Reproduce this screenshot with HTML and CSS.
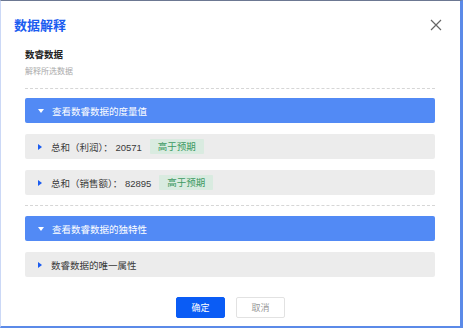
FILE: index.html
```html
<!DOCTYPE html>
<html lang="zh">
<head>
<meta charset="utf-8">
<link rel="stylesheet" href="styles.css">
</head>
<body>
<div class="dialog">
  <div class="header">
    <h1 class="title">数据解释</h1>
    <svg class="close" width="12" height="12" viewBox="0 0 12 12"><path d="M1 1L11 11M11 1L1 11" stroke="#666" stroke-width="1.2" fill="none"/></svg>
  </div>
  <div class="body">
    <div class="intro">
      <div class="name">数睿数据</div>
      <div class="desc">解释所选数据</div>
    </div>
    <div class="section">
      <div class="bar"><span class="tri-down"></span>查看数睿数据的度量值</div>
      <div class="row"><span class="tri-right"></span>总和（利润）： 20571<span class="tag">高于预期</span></div>
      <div class="row"><span class="tri-right"></span>总和（销售额）： 82895<span class="tag">高于预期</span></div>
    </div>
    <div class="section second">
      <div class="bar"><span class="tri-down"></span>查看数睿数据的独特性</div>
      <div class="row"><span class="tri-right"></span>数睿数据的唯一属性</div>
    </div>
  </div>
  <div class="footer">
    <button class="btn primary">确定</button>
    <button class="btn">取消</button>
  </div>
</div>
</body>
</html>
```
FILE: styles.css
```css
* { box-sizing: border-box; }
html, body { margin: 0; padding: 0; }
body {
  font-family: "Noto Sans CJK SC", "Noto Sans", sans-serif;
  background: #fff;
}
.dialog {
  width: 463px;
  height: 328px;
  border-top: 1px solid #6c7892;
  border-left: 1px solid #cbd8f6;
  border-right: 3px solid #5b8ae8;
  border-bottom: 2px solid #5b8ae8;
  background: #fff;
  display: flex;
  flex-direction: column;
}
.header {
  display: flex;
  align-items: center;
  justify-content: space-between;
  padding: 14px 18px 0 13px;
  height: 34px;
}
.title {
  margin: 0;
  font-size: 13px;
  font-weight: 700;
  color: #1a5cf0;
  line-height: 18px;
}
.close { display: block; }
.body {
  padding: 0 25px 0 24px;
  display: flex;
  flex-direction: column;
}
.intro {
  padding-top: 12px;
  padding-bottom: 11px;
  border-bottom: 1px dashed #d6d6d6;
}
.name {
  font-size: 9.5px;
  font-weight: 700;
  color: #222;
  line-height: 14px;
}
.desc {
  font-size: 8px;
  color: #aaa;
  line-height: 12px;
  margin-top: 4px;
}
.section {
  padding: 9px 0 0;
  display: flex;
  flex-direction: column;
  gap: 11px;
}
.section.second {
  border-top: 1px dashed #d6d6d6;
  margin-top: 10px;
  padding-top: 10px;
}
.bar {
  height: 25px;
  background: #528af5;
  border-radius: 2px;
  color: #fff;
  font-size: 9.5px;
  display: flex;
  align-items: center;
  padding-left: 13px;
}
.row {
  height: 25px;
  background: #ececec;
  border-radius: 2px;
  color: #3a3a3a;
  font-family: "Liberation Sans", "Noto Sans CJK SC", sans-serif;
  font-size: 9.5px;
  display: flex;
  align-items: center;
  padding-left: 13px;
  white-space: pre;
}
.tri-down {
  width: 0; height: 0;
  border-left: 3px solid transparent;
  border-right: 3px solid transparent;
  border-top: 4px solid #fff;
  margin-right: 8px;
}
.tri-right {
  width: 0; height: 0;
  border-top: 3px solid transparent;
  border-bottom: 3px solid transparent;
  border-left: 4px solid #1a5cf0;
  margin-right: 9px;
}
.tag {
  margin-left: 8px;
  background: #d9ebe0;
  color: #3d9a62;
  font-family: "Noto Sans CJK SC", sans-serif;
  font-size: 9.5px;
  height: 15px;
  line-height: 15px;
  padding: 0 8px;
  border-radius: 1px;
}
.footer {
  margin-top: auto;
  display: flex;
  justify-content: center;
  gap: 11px;
  padding-bottom: 8px;
}
.btn {
  width: 49px;
  height: 21px;
  font-family: inherit;
  font-size: 9px;
  border: 1px solid #e2e2e2;
  background: #fff;
  color: #999;
  border-radius: 2px;
  padding: 0;
}
.btn.primary {
  background: #0a5cf5;
  border-color: #0a5cf5;
  color: #fff;
}
```
